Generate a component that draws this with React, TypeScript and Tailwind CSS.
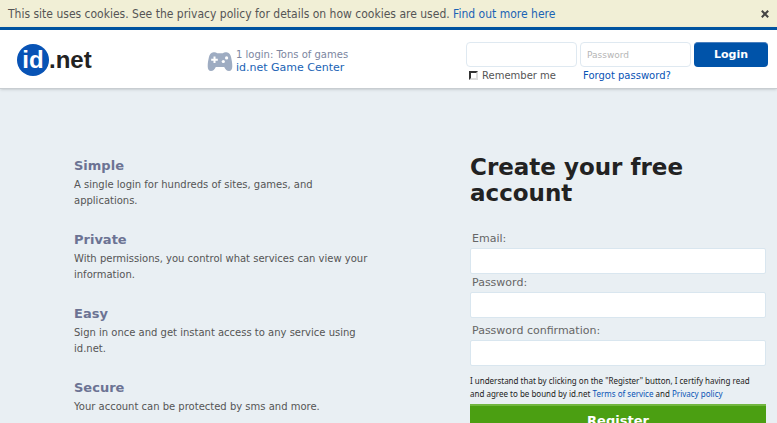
import React from "react";

const features = [
  {
    title: "Simple",
    text: "A single login for hundreds of sites, games, and applications.",
  },
  {
    title: "Private",
    text: "With permissions, you control what services can view your information.",
  },
  {
    title: "Easy",
    text: "Sign in once and get instant access to any service using id.net.",
  },
  {
    title: "Secure",
    text: "Your account can be protected by sms and more.",
  },
];

function Logo() {
  return (
    <a
      href="#"
      className="flex items-center font-['Liberation_Sans',sans-serif] text-2xl font-bold leading-8"
    >
      <span className="flex h-8 w-8 items-center justify-center rounded-full bg-[#0853b5] text-white">
        id
      </span>
      <span className="text-[#222]">.net</span>
    </a>
  );
}

function GamepadIcon() {
  return (
    <svg width="26" height="20" viewBox="0 0 26 20" aria-hidden="true">
      <path
        fill="#9eacc2"
        d="M6.500.3C8 0 9.200.4 10.200 1.300h5.600c1-.9 2.200-1.300 3.700-1 2.500.5 3.900 2 4.600 5 .6 2.800 1.200 5.800 1.200 8.900 0 3-1.100 4.900-3.300 4.900-2.300 0-3.400-1.500-4.800-4H8.800c-1.400 2.500-2.500 4-4.800 4-2.200 0-3.300-1.900-3.300-4.900 0-3.100.6-6.100 1.200-8.900.7-3 2.100-4.500 4.600-5Z"
      />
      <path fill="#fff" d="M6.500 4.500h2v2.300h2.300v2H8.500v2.300h-2V8.800H4.200v-2h2.300Z" />
      <circle cx="19.600" cy="5.900" r="1.600" fill="#fff" />
      <circle cx="16.300" cy="9.500" r="1.600" fill="#fff" />
    </svg>
  );
}

function Field({
  id,
  label,
  type,
  className,
}: {
  id: string;
  label: string;
  type: string;
  className?: string;
}) {
  return (
    <div className={className}>
      <label
        htmlFor={id}
        className="block px-0.5 text-[11px] leading-[18px] text-[#666]"
      >
        {label}
      </label>
      <input
        id={id}
        type={type}
        className="block h-[26px] w-full rounded-xs border border-[#d9e6ef] bg-white px-2 text-[11px] outline-none"
      />
    </div>
  );
}

export default function App() {
  return (
    <div className="min-h-screen bg-[#e9eff3] font-['DejaVu_Sans',sans-serif] text-[#555]">
      <div className="flex h-[27px] items-center justify-between bg-[#f1efd6] px-2 font-['DejaVu_Sans_Condensed',sans-serif] text-xs">
        <p>
          This site uses cookies. See the privacy policy for details on how
          cookies are used.{" "}
          <a href="#" className="text-[#1a63b5]">
            Find out more here
          </a>
        </p>
        <button type="button" aria-label="Close">
          <svg width="8" height="8" viewBox="0 0 8 8" aria-hidden="true">
            <path d="M.8.8l6.400 6.400M7.200.8L.8 7.200" stroke="#444" strokeWidth="2" />
          </svg>
        </button>
      </div>

      <header className="flex items-start justify-between border-t-[3px] border-b border-t-[#0053a0] border-b-[#c8cdd1] bg-white pb-1.5 pl-[17px] pr-[9px] pt-3 shadow-sm">
        <div className="flex w-[190px] pt-0.5">
          <Logo />
        </div>
        <div className="flex flex-1 items-start gap-[3px] pt-1.5">
          <div className="pt-1">
            <GamepadIcon />
          </div>
          <p className="text-[10px] leading-[13px] text-[#7c86a0]">
            1 login: Tons of games
            <a
              href="#"
              className="block text-[11px] leading-[13px] text-[#1a63b5]"
            >
              id.net Game Center
            </a>
          </p>
        </div>
        <form className="flex items-start gap-[3px]">
          <div className="w-[111px]">
            <input
              type="text"
              aria-label="Email"
              className="block h-[25px] w-full rounded-sm border border-[#dfe9f1] px-1.5 text-[9px] outline-none"
            />
            <label className="flex items-center gap-1 px-[3px] pt-0.5 text-[10px] leading-[13px]">
              <input
                type="checkbox"
                className="h-[9px] w-[9px] appearance-none border-2 border-[#333] border-b-[#ddd] border-r-[#ddd] bg-white"
              />
              Remember me
            </label>
          </div>
          <div className="w-[111px]">
            <input
              type="password"
              aria-label="Password"
              placeholder="Password"
              className="block h-[25px] w-full rounded-sm border border-[#dfe9f1] px-1.5 text-[9px] outline-none placeholder:text-[#b5b5b5]"
            />
            <a
              href="#"
              className="block px-[3px] pt-0.5 text-[10px] leading-[13px] text-[#0853b5]"
            >
              Forgot password?
            </a>
          </div>
          <button
            type="button"
            className="h-[25px] w-[74px] rounded-sm border-t border-[#4a80bf] bg-[#0053a9] text-[11px] font-bold text-white"
          >
            Login
          </button>
        </form>
      </header>

      <main className="flex items-start justify-between pl-[74px] pr-[11px] pt-[65px]">
        <section className="w-[300px] pt-0.5">
          {features.map((feature) => (
            <div key={feature.title} className="mb-[21px]">
              <h2 className="text-[13px] font-bold leading-5 text-[#6c7393]">
                {feature.title}
              </h2>
              <p className="pt-px text-[10px] leading-4">{feature.text}</p>
            </div>
          ))}
        </section>

        <section className="w-[296px]">
          <h1 className="text-[23px] font-bold leading-[26px] text-[#222]">
            Create your free account
          </h1>
          <form className="pt-6">
            <Field id="email" label="Email:" type="email" />
            <Field id="password" label="Password:" type="password" />
            <Field
              id="confirmation"
              label="Password confirmation:"
              type="password"
              className="pt-1"
            />
            <p className="pb-1 pr-1 pt-2 font-['Noto_Sans',sans-serif] text-[8px] leading-[13px] text-[#222]">
              I understand that by clicking on the "Register" button, I certify
              having read and agree to be bound by id.net{" "}
              <a href="#" className="text-[#0853b5]">
                Terms of service
              </a>{" "}
              and{" "}
              <a href="#" className="text-[#0853b5]">
                Privacy policy
              </a>
            </p>
            <button
              type="button"
              className="h-8 w-full border-t-2 border-[#72b640] bg-[#4b9f12] text-[13px] font-bold text-white"
            >
              Register
            </button>
          </form>
        </section>
      </main>
    </div>
  );
}
